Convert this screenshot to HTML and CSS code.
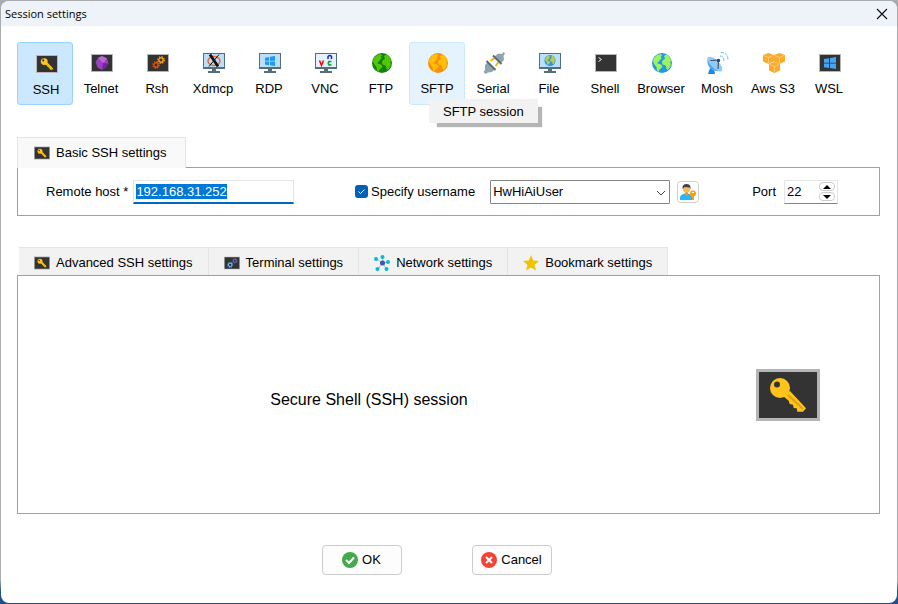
FILE: index.html
```html
<!DOCTYPE html>
<html lang="en">
<head>
    <meta charset="UTF-8">
    <meta name="viewport" content="width=device-width, initial-scale=1.0">
    <title>Session settings</title>
    <link rel="stylesheet" href="styles.css">
</head>
<body>
    <!-- Shared icon shapes -->
    <svg class="sprites" aria-hidden="true">
        <symbol id="key" viewBox="0 0 64 52">
            <path fill="#b5b5b5" d="M0 0h64v52H0z"/>
            <path fill="#333" d="M3 3h58v46H3z"/>
            <path fill="#ffc41c" d="M27 27l5.700 4.700 1 3.300 3.300.7.700 3.300 3 .3.600 3.400H47l3-3.400L34 22z"/>
            <path stroke="#e09f10" stroke-width="2" d="M32 26l15 14"/>
            <circle cx="24" cy="19" r="10" fill="#ffc41c"/>
            <circle cx="21" cy="15.500" r="3" fill="#333"/>
        </symbol>
        <symbol id="terminal" viewBox="0 0 22 18">
            <path fill="#b5b5b5" d="M0 0h22v18H0z"/>
            <path fill="#333" d="M1 1h20v16H1z"/>
        </symbol>
        <symbol id="monitor" viewBox="0 0 22 20">
            <path fill="#546e7a" d="M0 0h22v16h-9v2h4v2H5v-2h4v-2H0z"/>
            <path fill="#bbdefb" d="M1 1h20v13H1z"/>
        </symbol>
        <symbol id="windows" viewBox="0 0 12 12">
            <path d="M0 2l5-.8v4.500H0zM6 1l6-1v5.700H6zM0 6.500h5V11l-5-.8zM6 6.500h6V12l-6-1z"/>
        </symbol>
        <symbol id="land" viewBox="0 0 20 20">
            <path d="M1 8q1-4 4-6l4-1 1 1.500L8.500 4 10 5 8 7 6.500 9 5 10l2 1 2 .5 1.500 2-1.500 2-1.500 1L6.500 19 5 17.500 4.500 14 2 11zM12 3l2-1.500q3 1 4.500 4L19 8l-1 1 1 2-1 3-2 3-1.500-1-.5-3-1.500-1-2-.5L10 9l1-2 2-1z"/>
        </symbol>
        <symbol id="gear" viewBox="0 0 10 10">
            <circle cx="5" cy="5" r="2.700" fill="none" stroke="currentColor" stroke-width="1.800"/>
            <circle cx="5" cy="5" r="4.200" fill="none" stroke="currentColor" stroke-width="1.400" stroke-dasharray="1.650 1.650"/>
        </symbol>
        <symbol id="cube" viewBox="0 0 11 11">
            <path fill="#fbab2c" d="M5.500 0L11 2v6.500l-5.500 2.500L0 8.500V2z"/>
            <path fill="none" stroke="#ffe3b0" stroke-width=".6" d="M1 2.500l4.500 2 4.500-2M5.500 4.500V10"/>
        </symbol>
    </svg>

    <div class="dialog" role="dialog" aria-labelledby="title">
        <header class="titlebar">
            <h1 id="title">Session settings</h1>
            <button class="close" type="button" aria-label="Close">
                <svg width="12" height="12" viewBox="0 0 12 12"><path stroke="#111" stroke-width="1.200" d="M1 1l10 10M11 1L1 11"/></svg>
            </button>
        </header>

        <main>
            <nav class="toolbar">
                <button class="tool selected" type="button">
                    <svg viewBox="0 0 22 22"><use href="#key" y="2" width="22" height="18"/></svg>
                    SSH
                </button>
                <button class="tool" type="button">
                    <svg viewBox="0 0 22 22">
                        <use href="#terminal" y="2" width="22" height="18"/>
                        <path fill="#9c3fc0" d="M11 4l5 2.500 1.500 5L14 16l-3 2-4.500-2.500L4.500 10 7 6z"/>
                        <path fill="#ba68d8" d="M11 4l5 2.500-4 4.500-5-5z"/>
                        <path fill="#7b1fa2" d="M12 11l5.500.5L14 16l-3 2z"/>
                    </svg>
                    Telnet
                </button>
                <button class="tool" type="button">
                    <svg viewBox="0 0 22 22">
                        <use href="#terminal" y="2" width="22" height="18"/>
                        <use href="#gear" class="gear-red" x="5" y="9" width="8" height="8"/>
                        <use href="#gear" class="gear-orange" x="10" y="4" width="8" height="8"/>
                    </svg>
                    Rsh
                </button>
                <button class="tool" type="button">
                    <svg viewBox="0 0 22 22">
                        <use href="#monitor" y="1" width="22" height="20"/>
                        <ellipse cx="11" cy="9" rx="6" ry="4.500" fill="none" stroke="#f4672d" stroke-width="1.500"/>
                        <path stroke="#111" stroke-width="2.800" d="M7 2.500l8 12"/>
                        <path stroke="#111" stroke-width="1" d="M16 2.500L6 14.500"/>
                    </svg>
                    Xdmcp
                </button>
                <button class="tool" type="button">
                    <svg viewBox="0 0 22 22">
                        <use href="#monitor" y="1" width="22" height="20"/>
                        <use href="#windows" x="6" y="4" width="10" height="10" fill="#2196f3"/>
                    </svg>
                    RDP
                </button>
                <button class="tool" type="button">
                    <svg viewBox="0 0 22 22">
                        <use href="#monitor" y="1" width="22" height="20"/>
                        <path fill="#e3f2fd" d="M1 2h20v13H1z"/>
                        <path fill="none" stroke="#f00" stroke-width="1.500" d="M4.500 8.500l2 5 2-5"/>
                        <path fill="none" stroke="#22c" stroke-width="1.500" d="M13 7V4.500q2-2 3.500 0V7"/>
                        <path fill="none" stroke="#0a9e32" stroke-width="1.500" d="M16.500 9.500h-2.500q-1.500 2 0 3.500h2.500"/>
                    </svg>
                    VNC
                </button>
                <button class="tool" type="button">
                    <svg viewBox="0 0 22 22">
                        <circle cx="11" cy="11" r="10" fill="#187d12"/>
                        <use href="#land" x="1" y="1" width="20" height="20" fill="#51c70a"/>
                    </svg>
                    FTP
                </button>
                <button class="tool hovered" type="button" aria-describedby="tip">
                    <svg viewBox="0 0 22 22">
                        <circle cx="11" cy="11" r="10" fill="#ff8a0d"/>
                        <use href="#land" x="1" y="1" width="20" height="20" fill="#ffc107"/>
                    </svg>
                    SFTP
                    <span class="tooltip" id="tip" role="tooltip">SFTP session</span>
                </button>
                <button class="tool" type="button">
                    <svg viewBox="0 0 22 22">
                        <path stroke="#ffb300" stroke-width="2" d="M7.500 9l4-3M12.500 14l3-4"/>
                        <path fill="#90a4ae" d="M2 13l3-3 7 7-3 3-4 .5L2.500 22 .5 20 2 18zM11 5l4-3.500 4 .5L20.500 0 22 1.500 20.500 4l.5 4-3 3z"/>
                        <path stroke="#546e7a" stroke-width="2" d="M3.500 9l9 9M10 3.500l8.500 8.500"/>
                    </svg>
                    Serial
                </button>
                <button class="tool" type="button">
                    <svg viewBox="0 0 22 22">
                        <use href="#monitor" y="1" width="22" height="20"/>
                        <circle cx="11" cy="8.500" r="5.500" fill="#2196f3"/>
                        <use href="#land" x="5" y="3" width="12" height="11" fill="#c5ca3d"/>
                    </svg>
                    File
                </button>
                <button class="tool" type="button">
                    <svg viewBox="0 0 22 22">
                        <use href="#terminal" y="2" width="22" height="18"/>
                        <path fill="none" stroke="#eee" d="M3.500 5.500l3 2-3 2"/>
                    </svg>
                    Shell
                </button>
                <button class="tool" type="button">
                    <svg viewBox="0 0 22 22">
                        <circle cx="11" cy="11" r="10" fill="#2196f3"/>
                        <use href="#land" x="1" y="1" width="20" height="20" fill="#9cf45a"/>
                    </svg>
                    Browser
                </button>
                <button class="tool" type="button">
                    <svg viewBox="0 0 22 22">
                        <path fill="#1e88e5" d="M3 16l4 1 1 5H1z"/>
                        <path fill="#4dabf5" d="M1 5q-2 7 2 11t12 3z"/>
                        <ellipse cx="8" cy="12" rx="9.500" ry="4" transform="rotate(45 8 12)" fill="#90caf9"/>
                        <path fill="none" stroke="#37474f" d="M3.500 8.500l8-.5-.5 9"/>
                        <circle cx="11.500" cy="8.500" r="1.700" fill="#0d47a1"/>
                        <path fill="none" stroke="#64b5f6" stroke-dasharray="3 1" d="M13 4q4 0 4 5M14 .5q7 0 7 8"/>
                    </svg>
                    Mosh
                </button>
                <button class="tool" type="button">
                    <svg viewBox="0 0 22 22">
                        <use href="#cube" x="0" y="1" width="11" height="11"/>
                        <use href="#cube" x="11" y="1" width="11" height="11"/>
                        <use href="#cube" x="6" y="10" width="11" height="11"/>
                    </svg>
                    Aws S3
                </button>
                <button class="tool" type="button">
                    <svg viewBox="0 0 22 22">
                        <use href="#terminal" y="2" width="22" height="18"/>
                        <use href="#windows" x="5" y="5" width="12" height="12" fill="#42a5f5"/>
                    </svg>
                    WSL
                </button>
            </nav>

            <form>
                <section class="basic">
                    <div class="tab active">
                        <svg width="16" height="14"><use href="#key"/></svg>
                        Basic SSH settings
                    </div>
                    <div class="panel fields">
                        <div class="field">
                            <label for="host">Remote host *</label>
                            <input class="host" id="host" type="text" value="192.168.31.252" spellcheck="false">
                        </div>
                        <div class="field">
                            <label class="check">
                                <span class="tick">
                                    <input type="checkbox" checked>
                                    <svg width="13" height="13" viewBox="0 0 13 13"><path fill="none" stroke="#fff" d="M3.500 6.500l2 2 4-4"/></svg>
                                </span>
                                Specify username
                            </label>
                            <span class="combo">
                                <select aria-label="Username">
                                    <option>HwHiAiUser</option>
                                </select>
                                <svg width="10" height="6" viewBox="0 0 10 6"><path fill="none" stroke="#444" d="M1 1l4 4 4-4"/></svg>
                            </span>
                            <button class="users" type="button" aria-label="Manage users">
                                <svg width="18" height="18" viewBox="0 0 18 18">
                                    <path fill="#29b6f6" d="M1 17v-3q1-3 5-3.500h3q3 .5 4 3V17z"/>
                                    <path fill="#ff9800" d="M6 9h3v2.500L7.500 13 6 11.500z"/>
                                    <circle cx="7.500" cy="6" r="3.500" fill="#ffb74d"/>
                                    <path fill="#424242" d="M3.500 6V4Q4 1 7.500 1T11.500 4v2l-1-1.500-5-.5z"/>
                                    <circle cx="14" cy="10.500" r="3" fill="#ffa000"/>
                                    <path fill="#ffa000" d="M13 12h2v5h-2z"/>
                                    <path fill="#fff" d="M13 9h2v1h-2z"/>
                                </svg>
                            </button>
                        </div>
                        <div class="field">
                            <label for="port">Port</label>
                            <span class="spin">
                                <input id="port" type="text" inputmode="numeric" value="22">
                                <span class="arrows">
                                    <button type="button" aria-label="Increase port"><svg width="8" height="4" viewBox="0 0 8 4"><path d="M0 4l4-4 4 4z"/></svg></button>
                                    <button type="button" aria-label="Decrease port"><svg width="8" height="4" viewBox="0 0 8 4"><path d="M0 0l4 4 4-4z"/></svg></button>
                                </span>
                            </span>
                        </div>
                    </div>
                </section>

                <section class="advanced">
                    <div class="tabs">
                        <button class="tab" type="button">
                            <svg width="16" height="14"><use href="#key"/></svg>
                            Advanced SSH settings
                        </button>
                        <button class="tab" type="button">
                            <svg width="16" height="14" viewBox="0 0 22 18">
                                <use href="#terminal" width="22" height="18"/>
                                <use href="#gear" class="gear-blue" x="4" y="7" width="9" height="9"/>
                                <use href="#gear" class="gear-indigo" x="11" y="2" width="8" height="8"/>
                            </svg>
                            Terminal settings
                        </button>
                        <button class="tab" type="button">
                            <svg width="16" height="16" viewBox="0 0 16 16">
                                <path stroke="#b0bec5" d="M8.500 8L2 4M8.500 8V2M8.500 8l6-1M8.500 8L4 14M8.500 8l4 6"/>
                                <g fill="#00bcd4"><circle cx="2" cy="4" r="2"/><circle cx="8.500" cy="2" r="2"/><circle cx="14" cy="7" r="2"/><circle cx="3.500" cy="14" r="2"/><circle cx="12.500" cy="14" r="2"/></g>
                                <circle cx="8.500" cy="8" r="2.500" fill="#3f51b5"/>
                            </svg>
                            Network settings
                        </button>
                        <button class="tab" type="button">
                            <svg width="16" height="16" viewBox="0 0 16 16"><path fill="#f2c200" d="M8 0l2.200 5.500 5.800.5-4.500 4 1.500 5.500-5-3-5 3L4.500 10 0 6l5.800-.5z"/></svg>
                            Bookmark settings
                        </button>
                    </div>
                    <div class="panel summary">
                        <p>Secure Shell (SSH) session</p>
                        <svg width="64" height="52"><use href="#key"/></svg>
                    </div>
                </section>

                <div class="actions">
                    <button type="submit">
                        <svg width="16" height="16" viewBox="0 0 16 16"><circle cx="8" cy="8" r="8" fill="#43a94b"/><path fill="none" stroke="#fff" stroke-width="2" d="M4 8l3 3 5-5.500"/></svg>
                        OK
                    </button>
                    <button type="button">
                        <svg width="16" height="16" viewBox="0 0 16 16"><circle cx="8" cy="8" r="8" fill="#f44336"/><path stroke="#fff" stroke-width="2" d="M5 5l6 6M11 5l-6 6"/></svg>
                        Cancel
                    </button>
                </div>
            </form>
        </main>
    </div>

    <script>
        // Start with the host selected so it can be typed over
        const host = document.getElementById('host');
        host.focus();
        host.select();
    </script>
</body>
</html>
```

FILE: styles.css
```css
* {
    box-sizing: border-box;
}

body {
    margin: 0;
    padding: 1px;
    min-height: 100vh;
    display: flex;
    background: linear-gradient(to bottom, #a9abaf 96%, #1f4f8f 98%);
    font-family: "Liberation Sans", Arial, sans-serif;
    font-size: 13px;
    line-height: 16px;
    color: #000;
}

button, input, select {
    font: inherit;
    color: inherit;
    margin: 0;
}

button {
    padding: 0;
    border: none;
    background: none;
}

svg {
    display: block;
    flex: none;
}

.sprites {
    position: absolute;
    width: 0;
    height: 0;
}

.dialog {
    flex: 1;
    display: flex;
    flex-direction: column;
    background: #fff;
    border-radius: 8px;
    overflow: hidden;
}

.titlebar {
    display: flex;
    align-items: center;
    justify-content: space-between;
    height: 25px;
    padding: 0 9px 0 4px;
    background: #eef2f9;
}

.titlebar h1 {
    margin: 0;
    font-family: "Open Sans", "Noto Sans", sans-serif;
    font-size: 11px;
    font-weight: normal;
}

main {
    flex: 1;
    display: flex;
    flex-direction: column;
    padding: 16px 17px 28px 16px;
}

/* Session types */
.toolbar {
    display: flex;
    margin-bottom: 32px;
}

.tool {
    position: relative;
    display: flex;
    flex-direction: column;
    align-items: center;
    gap: 7px;
    width: 56px;
    height: 63px;
    padding-top: 9px;
    border: 1px solid transparent;
    border-radius: 3px;
    white-space: nowrap;
}

.tool svg {
    width: 22px;
    height: 22px;
    margin-left: 2px;
}

.tool.selected {
    padding: 10px 0 0 2px;
    background: #cce8ff;
    border-color: #99d1ff;
}

.tool.hovered {
    background: #e5f3ff;
    border-color: #cce8ff;
}

.gear-red {
    color: #e65100;
}

.gear-orange {
    color: #ffa000;
}

.gear-blue {
    color: #64b5f6;
}

.gear-indigo {
    color: #5c6bc0;
}

.tooltip {
    position: absolute;
    z-index: 1;
    top: 56px;
    left: 19px;
    padding: 5px 14px 3px;
    background: #f2f2f2;
    box-shadow: 6px 6px 1px -2px #b5b5b5;
}

/* Tabs and panels */
form {
    flex: 1;
    display: flex;
    flex-direction: column;
    gap: 31px;
}

.panel {
    border: 1px solid #a0a0a0;
}

.tab {
    display: flex;
    align-items: center;
    gap: 6px;
    height: 28px;
    padding: 2px 15px 0;
    background: #f2f2f2;
    border: 1px solid #e5e5e5;
    border-width: 1px 1px 0 0;
}

.tab.active {
    position: relative;
    width: fit-content;
    height: 31px;
    margin-bottom: -1px;
    padding: 0 18px 0 16px;
    background: #f9f9f9;
    border-width: 1px 1px 0 1px;
}

.fields {
    display: grid;
    grid-template-columns: 309fr 397fr auto;
    align-items: center;
    height: 49px;
    padding: 0 41px 0 28px;
}

.field {
    display: flex;
    align-items: center;
    white-space: nowrap;
}

.host {
    width: 161px;
    height: 24px;
    margin-left: 5px;
    padding: 0 2px;
    border: 1px solid #e5e5e5;
    border-bottom: 2px solid #0067c0;
    outline: none;
}

.host::selection {
    background: #0078d7;
    color: #fff;
}

.check {
    display: flex;
    align-items: center;
    gap: 3px;
    margin-right: 15px;
}

.tick {
    position: relative;
}

.tick input {
    display: block;
    appearance: none;
    width: 13px;
    height: 13px;
    border-radius: 3px;
    background: #005fb8;
}

.tick svg {
    position: absolute;
    top: 0;
    left: 0;
}

.combo {
    position: relative;
    margin-right: 7px;
}

.combo select {
    display: block;
    appearance: none;
    width: 180px;
    height: 24px;
    padding: 0 2px;
    border: 1px solid #858585;
    border-radius: 1px;
    background: #fff;
}

.combo svg {
    position: absolute;
    top: 10px;
    right: 4px;
    pointer-events: none;
}

.users {
    padding: 1px;
    border: 1px solid #d0d0d0;
    border-radius: 4px;
    background: #fdfdfd;
}

.spin {
    display: flex;
    align-items: center;
    width: 54px;
    height: 24px;
    margin-left: 8px;
    padding-right: 2px;
    border: 1px solid #e5e5e5;
    border-bottom-color: #858585;
}

.spin input {
    flex: 1;
    min-width: 0;
    padding: 0 2px;
    border: none;
    background: none;
    outline: none;
}

.arrows {
    display: grid;
    gap: 1px;
}

.arrows button {
    display: grid;
    place-items: center;
    width: 16px;
    height: 9px;
    border: 1px solid #ccc;
    border-radius: 4px;
}

.advanced {
    flex: 1;
    display: flex;
    flex-direction: column;
}

.tabs {
    display: flex;
    padding-left: 2px;
}

.summary {
    flex: 1;
    display: grid;
    grid-template-columns: 1fr 136px;
    place-items: center;
    padding-right: 23px;
}

.summary p {
    margin: 0;
    padding-top: 10px;
    font-size: 16px;
}

/* Dialog buttons */
.actions {
    display: flex;
    justify-content: center;
    gap: 70px;
    padding-right: 24px;
}

.actions button {
    display: flex;
    align-items: center;
    justify-content: center;
    gap: 4px;
    width: 80px;
    height: 30px;
    border: 1px solid #ccc;
    border-radius: 4px;
    background: #fdfdfd;
}
```
